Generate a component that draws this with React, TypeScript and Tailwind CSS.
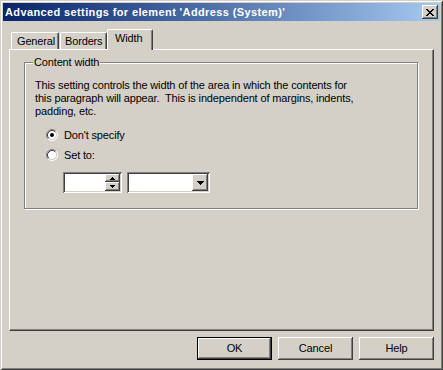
import React from "react";

const raised =
  "shadow-[inset_-1px_-1px_0_#404040,inset_1px_1px_0_#ffffff,inset_-2px_-2px_0_#808080,inset_2px_2px_0_#d4d0c8]";
const sunken =
  "shadow-[inset_1px_1px_0_#808080,inset_-1px_-1px_0_#ffffff,inset_2px_2px_0_#404040,inset_-2px_-2px_0_#d4d0c8]";

function Radio({ checked }: { checked?: boolean }) {
  return (
    <svg width="12" height="12" viewBox="0 0 12 12" className="shrink-0">
      <circle cx="6" cy="6" r="4.2" fill="#ffffff" />
      <path d="M 2.11 9.89 A 5.5 5.5 0 0 1 9.89 2.11" stroke="#808080" strokeWidth="1" fill="none" />
      <path d="M 9.89 2.11 A 5.5 5.5 0 0 1 2.11 9.89" stroke="#ffffff" strokeWidth="1" fill="none" />
      <path d="M 2.82 9.18 A 4.5 4.5 0 0 1 9.18 2.82" stroke="#404040" strokeWidth="1" fill="none" />
      <path d="M 9.18 2.82 A 4.5 4.5 0 0 1 2.82 9.18" stroke="#d4d0c8" strokeWidth="1" fill="none" />
      {checked && <circle cx="6" cy="6" r="2" fill="#000000" />}
    </svg>
  );
}

function Button({ label, def }: { label: string; def?: boolean }) {
  return (
    <div
      className={
        "w-[75px] h-[23px] flex items-center justify-center text-black bg-[#d4d0c8] " +
        (def
          ? "border border-black shadow-[inset_-1px_-1px_0_#404040,inset_1px_1px_0_#ffffff,inset_-2px_-2px_0_#808080,inset_2px_2px_0_#d4d0c8]"
          : raised)
      }
    >
      {label}
    </div>
  );
}

export default function App() {
  return (
    <div
      className="w-[443px] h-[370px] bg-[#d4d0c8] p-[3px] flex flex-col text-[11px] leading-[13px] tracking-[-0.15px] text-black shadow-[inset_1px_1px_0_#d4d0c8,inset_-1px_-1px_0_#404040,inset_2px_2px_0_#ffffff,inset_-2px_-2px_0_#808080]"
      style={{ fontFamily: '"Liberation Sans", Arial, sans-serif' }}
    >
      {/* Title bar */}
      <div className="h-[18px] flex items-center justify-between bg-gradient-to-r from-[#0a246a] to-[#a6caf0] pl-[2px] pr-[2px]">
        <span className="text-white font-bold text-[11px] tracking-[0.38px] whitespace-nowrap">
          Advanced settings for element 'Address (System)'
        </span>
        <div className={"w-[16px] h-[14px] bg-[#d4d0c8] flex items-center justify-center " + raised}>
          <svg width="8" height="7" viewBox="0 0 8 7" shapeRendering="crispEdges">
            <path
              d="M0 0h2v1H0zM6 0h2v1H6zM1 1h2v1H1zM5 1h2v1H5zM2 2h4v1H2zM3 3h2v1H3zM2 4h4v1H2zM1 5h2v1H1zM5 5h2v1H5zM0 6h2v1H0zM6 6h2v1H6z"
              fill="#000"
            />
          </svg>
        </div>
      </div>

      {/* Body */}
      <div className="flex flex-col pl-[6px] pr-[6px]">
        {/* Tabs */}
        <div className="flex items-end h-[20px] mt-[8px] pl-[2px] relative z-10">
          <div className="h-[17px] w-[48px] border-t border-l border-white border-r border-r-[#404040] rounded-tl-[2px] rounded-tr-[2px] shadow-[inset_-1px_0_0_#808080] flex items-center pl-[5px]">
            General
          </div>
          <div className="h-[17px] w-[47px] ml-[1px] border-t border-l border-white border-r border-r-[#404040] rounded-tl-[2px] rounded-tr-[2px] shadow-[inset_-1px_0_0_#808080] flex items-center pl-[4px]">
            Borders
          </div>
          <div className="h-[21px] w-[46px] -mb-[1px] bg-[#d4d0c8] border-t border-l border-white border-r border-r-[#404040] rounded-tl-[2px] rounded-tr-[2px] shadow-[inset_-1px_0_0_#808080] flex items-start pt-[2px] pl-[7px]">
            Width
          </div>
        </div>

        {/* Panel */}
        <div className="h-[282px] w-[425px] border border-white border-r-[#404040] border-b-[#404040] shadow-[inset_-1px_-1px_0_#808080] pl-[14px] pt-[12px]">
          {/* Group box */}
          <div className="relative w-[394px] h-[147px] border border-[#808080] shadow-[1px_1px_0_#ffffff,inset_1px_1px_0_#ffffff]">
            <span className="absolute left-[8px] top-[-7px] px-[1px] bg-[#d4d0c8] leading-[13px]">
              Content width
            </span>
            <div className="pl-[10px] pt-[16px] whitespace-nowrap">
              <div>This setting controls the width of the area in which the contents for</div>
              <div>this paragraph will appear.&nbsp; This is independent of margins, indents,</div>
              <div>padding, etc.</div>
            </div>
            <div className="flex flex-col pl-[21px] mt-[7px]">
              <div className="h-[20px] flex items-center gap-[6px]">
                <Radio checked />
                <span>Don't specify</span>
              </div>
              <div className="h-[20px] flex items-center gap-[6px]">
                <Radio />
                <span>Set to:</span>
              </div>
            </div>
            <div className="flex pl-[38px] mt-[7px] gap-[5px]">
              <div className={"w-[59px] h-[21px] bg-white flex items-center justify-end pr-[2px] " + sunken}>
                <div className="flex flex-col">
                  <div className={"w-[15px] h-[8px] bg-[#d4d0c8] flex items-center justify-center " + raised}>
                    <svg width="5" height="3" viewBox="0 0 5 3" shapeRendering="crispEdges">
                      <path d="M2 0h1v1H2zM1 1h3v1H1zM0 2h5v1H0z" fill="#000" />
                    </svg>
                  </div>
                  <div className={"w-[15px] h-[9px] bg-[#d4d0c8] flex items-center justify-center " + raised}>
                    <svg width="5" height="3" viewBox="0 0 5 3" shapeRendering="crispEdges">
                      <path d="M0 0h5v1H0zM1 1h3v1H1zM2 2h1v1H2z" fill="#000" />
                    </svg>
                  </div>
                </div>
              </div>
              <div className={"w-[83px] h-[21px] bg-white flex items-center justify-end pr-[2px] " + sunken}>
                <div className={"w-[16px] h-[17px] bg-[#d4d0c8] flex items-center justify-center " + raised}>
                  <svg width="7" height="4" viewBox="0 0 7 4" shapeRendering="crispEdges">
                    <path d="M0 0h7v1H0zM1 1h5v1H1zM2 2h3v1H2zM3 3h1v1H3z" fill="#000" />
                  </svg>
                </div>
              </div>
            </div>
          </div>
        </div>

        {/* Buttons */}
        <div className="flex justify-end gap-[6px] mt-[6px] w-[425px]">
          <Button label="OK" def />
          <Button label="Cancel" />
          <Button label="Help" />
        </div>
      </div>
    </div>
  );
}
